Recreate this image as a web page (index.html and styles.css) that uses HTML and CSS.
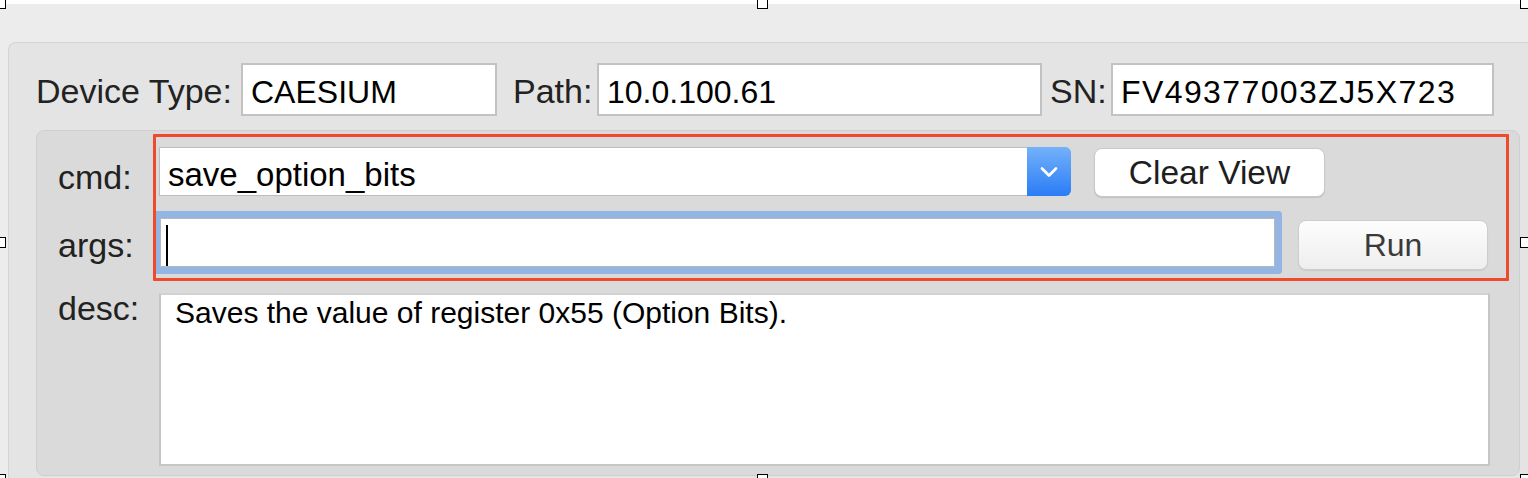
FILE: index.html
```html
<!DOCTYPE html>
<html>
<head>
<meta charset="utf-8">
<title>Device Console</title>
<link rel="stylesheet" href="styles.css">
</head>
<body>
<div class="topstrip"></div>
<div class="outer">
  <div class="info-row">
    <span class="lbl lbl-device">Device Type:</span>
    <div class="field f-device">CAESIUM</div>
    <span class="lbl lbl-path">Path:</span>
    <div class="field f-path">10.0.100.61</div>
    <span class="lbl lbl-sn">SN:</span>
    <div class="field f-sn">FV49377003ZJ5X723</div>
  </div>
  <div class="inner">
    <div class="row row-cmd">
      <span class="flbl">cmd:</span>
      <div class="combo">
        <span class="combo-text">save_option_bits</span>
        <span class="combo-arrow">
          <svg width="18" height="12" viewBox="0 0 18 12"><path d="M2 2.5 L9 9.5 L16 2.5" fill="none" stroke="#fff" stroke-width="2.8" stroke-linecap="round" stroke-linejoin="round"/></svg>
        </span>
      </div>
      <button class="btn btn-clear">Clear View</button>
    </div>
    <div class="row row-args">
      <span class="flbl">args:</span>
      <div class="args"><span class="caret"></span></div>
      <button class="btn btn-run">Run</button>
    </div>
    <div class="row row-desc">
      <span class="flbl">desc:</span>
      <div class="desc">Saves the value of register 0x55 (Option Bits).</div>
    </div>
  </div>
</div>
<div class="annot"></div>
<div class="handle h-tl"></div>
<div class="handle h-tm"></div>
<div class="handle h-tr"></div>
<div class="handle h-ml"></div>
<div class="handle h-mr"></div>
<div class="handle h-bl"></div>
<div class="handle h-bm"></div>
<div class="handle h-br"></div>
</body>
</html>
```
FILE: styles.css
```css
html, body {
  margin: 0;
  padding: 0;
}
body {
  width: 1528px;
  height: 478px;
  overflow: hidden;
  position: relative;
  background: #ececec;
  font-family: "Liberation Sans", Arial, sans-serif;
}
.topstrip {
  height: 4px;
  background: #ffffff;
}
.outer {
  margin: 38px 0 0 8px;
  width: 1560px;
  height: 436px;
  box-sizing: border-box;
  border: 1px solid #d4d4d4;
  border-bottom: none;
  border-radius: 8px 8px 0 0;
  background: #e4e4e4;
  padding: 20px 0 0 27px;
}
.info-row {
  display: flex;
  height: 53px;
}
.lbl {
  font-size: 34px;
  color: #222222;
  display: flex;
  align-items: center;
  padding-top: 3px;
  box-sizing: border-box;
  white-space: nowrap;
  flex: none;
}
.lbl-device { width: 205px; }
.lbl-path { width: 84px; margin-left: 16px; }
.lbl-sn { width: 61px; margin-left: 8px; }
.field {
  flex: none;
  box-sizing: border-box;
  background: #ffffff;
  border: 2px solid #c2c2c2;
  font-size: 32px;
  color: #000;
  padding: 6px 0 0 8px;
  display: flex;
  align-items: center;
  white-space: nowrap;
}
.f-device { width: 256px; }
.f-path { width: 445px; }
.f-sn { width: 383px; letter-spacing: 1.4px; }

.inner {
  width: 1484px;
  margin-top: 14px;
  box-sizing: border-box;
  background: #dadada;
  border: 1px solid #cfcfcf;
  border-radius: 8px;
  padding: 16px 0 9px 21px;
}
.row {
  display: flex;
  align-items: flex-start;
}
.flbl {
  flex: none;
  width: 101px;
  font-size: 34px;
  line-height: 37px;
  color: #222222;
}
.row-cmd .flbl { padding-top: 12px; }
.row-args { margin-top: 21px; }
.row-args .flbl { padding-top: 9px; }
.row-desc { margin-top: 23px; }
.row-desc .flbl { margin-top: -3px; }

.combo {
  flex: none;
  width: 912px;
  height: 49px;
  box-sizing: border-box;
  display: flex;
  background: #ffffff;
  border: 1px solid #bdbdbd;
  border-radius: 0 6px 6px 0;
}
.combo-text {
  flex: 1;
  font-size: 33px;
  color: #000;
  padding: 6px 0 0 8px;
  display: flex;
  align-items: center;
}
.combo-arrow {
  width: 44px;
  margin: -1px -1px -1px 0;
  background: linear-gradient(#74b1fa, #2a7cf6);
  border-radius: 0 6px 6px 0;
  display: flex;
  align-items: center;
  justify-content: center;
}
.btn {
  flex: none;
  font-family: "Liberation Sans", Arial, sans-serif;
  font-size: 32px;
  border-radius: 8px;
  box-sizing: border-box;
  padding: 0;
  display: flex;
  align-items: center;
  justify-content: center;
}
.btn-clear {
  margin: 1px 0 0 23px;
  width: 231px;
  height: 49px;
  font-size: 33.5px;
  background: #ffffff;
  border: 1px solid #c9c9c9;
  box-shadow: 0 1px 1px rgba(0, 0, 0, 0.12);
  color: #1e1e1e;
}
.args {
  flex: none;
  margin-left: 1px;
  width: 1115px;
  height: 49px;
  box-sizing: border-box;
  background: #ffffff;
  border: 1px solid #b8b8b8;
  border-radius: 1px;
  box-shadow: 0 0 0 7px #93b5e4;
}
.caret {
  display: block;
  margin: 6px 0 0 5px;
  width: 2px;
  height: 41px;
  background: #000;
}
.btn-run {
  margin: 2px 0 0 23px;
  width: 190px;
  height: 50px;
  background: linear-gradient(#fdfdfd, #eeeeee);
  border: 1px solid #cdcdcd;
  box-shadow: 0 1px 1px rgba(0, 0, 0, 0.08);
  color: #3a3a3a;
}
.desc {
  flex: none;
  width: 1331px;
  height: 173px;
  box-sizing: border-box;
  background: #ffffff;
  border: 2px solid #c6c6c6;
  border-top-color: #d2d2d2;
  font-size: 30px;
  line-height: 34px;
  color: #000;
  padding: 1px 0 0 14px;
}

.annot {
  position: absolute;
  left: 153px;
  top: 134px;
  width: 1356px;
  height: 147px;
  box-sizing: border-box;
  border: 3px solid #ef4a2b;
  border-radius: 1px;
}
.handle {
  position: absolute;
  width: 11px;
  height: 11px;
  box-sizing: border-box;
  background: #ffffff;
  border: 1px solid #000;
}
.h-tl { left: -5px; top: -2px; }
.h-tm { left: 757px; top: -2px; }
.h-tr { left: 1520px; top: -2px; }
.h-ml { left: -5px; top: 237px; }
.h-mr { left: 1520px; top: 237px; }
.h-bl { left: -5px; top: 474px; }
.h-bm { left: 757px; top: 474px; }
.h-br { left: 1520px; top: 474px; }
```
